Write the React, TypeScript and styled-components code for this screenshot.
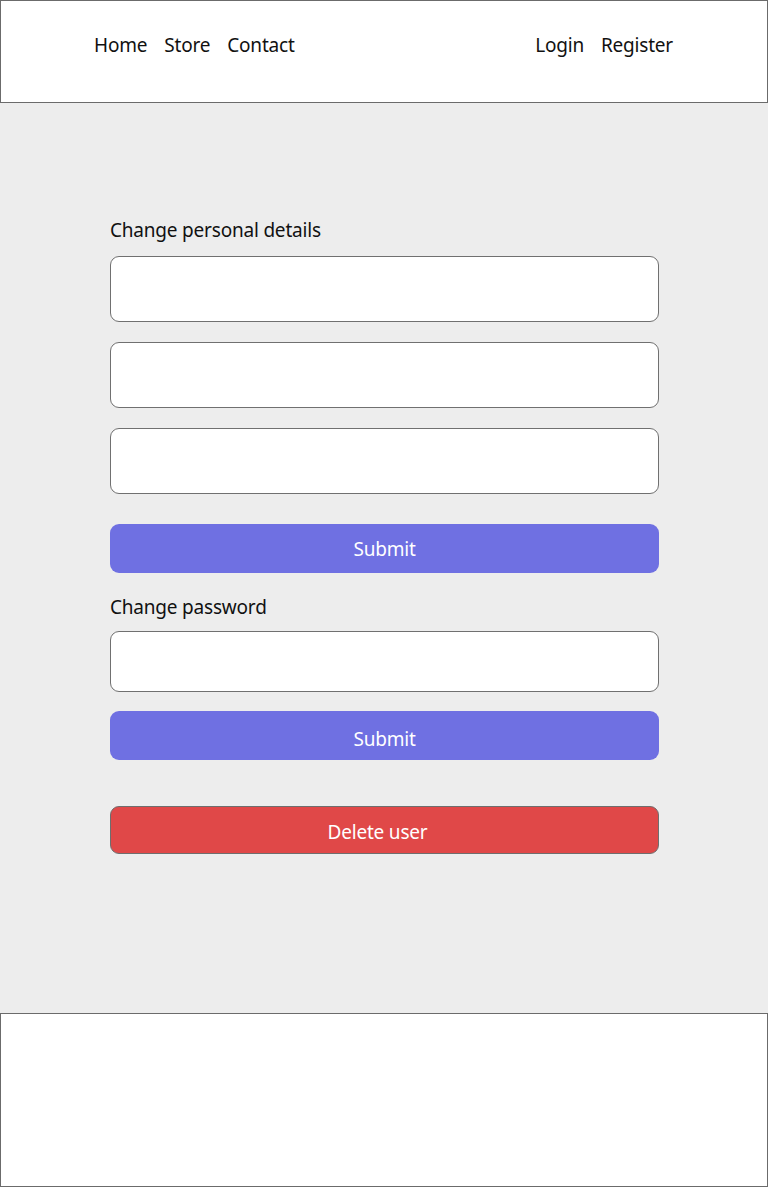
import React from "react";
import styled, { createGlobalStyle } from "styled-components";

const Global = createGlobalStyle`
  html, body { margin: 0; padding: 0; }
  body {
    background: #ededed;
    font-family: "Noto Sans", "Open Sans", sans-serif;
    color: #111;
  }
  * { box-sizing: border-box; }
`;

const Page = styled.div`
  display: flex;
  flex-direction: column;
  min-height: 1187px;
`;

const Header = styled.header`
  height: 103px;
  background: #fff;
  border: 1px solid #6b6b6b;
  display: flex;
  align-items: center;
  justify-content: space-between;
  padding: 0 94px 14px 93px;
`;

const NavGroup = styled.nav`
  display: flex;
  gap: 17px;
`;

const NavLink = styled.a`
  font-size: 19px;
  color: #111;
  text-decoration: none;
  letter-spacing: -0.2px;
`;

const Main = styled.main`
  flex: 1;
  display: flex;
  justify-content: center;
  padding: 115px 0 0;
`;

const Form = styled.div`
  width: 549px;
  display: flex;
  flex-direction: column;
  margin-left: 1px;
`;

const Label = styled.div<{ $mt?: number; $mb?: number }>`
  font-size: 19px;
  line-height: 24px;
  margin-top: ${(p) => p.$mt ?? 0}px;
  margin-bottom: ${(p) => p.$mb ?? 14}px;
  letter-spacing: -0.2px;
`;

const Input = styled.input<{ $h: number; $mb?: number }>`
  height: ${(p) => p.$h}px;
  width: 100%;
  background: #fff;
  border: 1px solid #707070;
  border-radius: 9px;
  margin: 0 0 ${(p) => p.$mb ?? 20}px;
  font-size: 16px;
  padding: 0 12px;
  outline: none;
`;

const Button = styled.button<{ $variant: "primary" | "danger"; $mt?: number; $pt?: number }>`
  height: ${(p) => (p.$variant === "danger" ? 48 : 49)}px;
  width: 100%;
  border-radius: 9px;
  border: ${(p) => (p.$variant === "danger" ? "1px solid #6e6e6e" : "none")};
  background: ${(p) => (p.$variant === "danger" ? "#e04848" : "#6f70e2")};
  color: #fff;
  font-family: "Noto Sans", "Open Sans", sans-serif;
  font-size: 19px;
  letter-spacing: -0.2px;
  margin: ${(p) => p.$mt ?? 0}px 0 0;
  padding: ${(p) => p.$pt ?? 0}px ${(p) => (p.$variant === "danger" ? 14 : 0)}px 0 0;
  cursor: pointer;
`;

const Footer = styled.footer`
  height: 174px;
  background: #fff;
  border: 1px solid #6b6b6b;
`;

export default function App() {
  return (
    <>
      <Global />
      <Page>
        <Header>
          <NavGroup>
            <NavLink href="#">Home</NavLink>
            <NavLink href="#">Store</NavLink>
            <NavLink href="#">Contact</NavLink>
          </NavGroup>
          <NavGroup>
            <NavLink href="#">Login</NavLink>
            <NavLink href="#">Register</NavLink>
          </NavGroup>
        </Header>
        <Main>
          <Form>
            <Label>Change personal details</Label>
            <Input $h={66} />
            <Input $h={66} />
            <Input $h={66} />
            <Button $variant="primary" $mt={10}>Submit</Button>
            <Label $mt={22} $mb={12}>Change password</Label>
            <Input $h={61} $mb={19} />
            <Button $variant="primary" $pt={6}>Submit</Button>
            <Button $variant="danger" $mt={46} $pt={3}>Delete user</Button>
          </Form>
        </Main>
        <Footer />
      </Page>
    </>
  );
}
